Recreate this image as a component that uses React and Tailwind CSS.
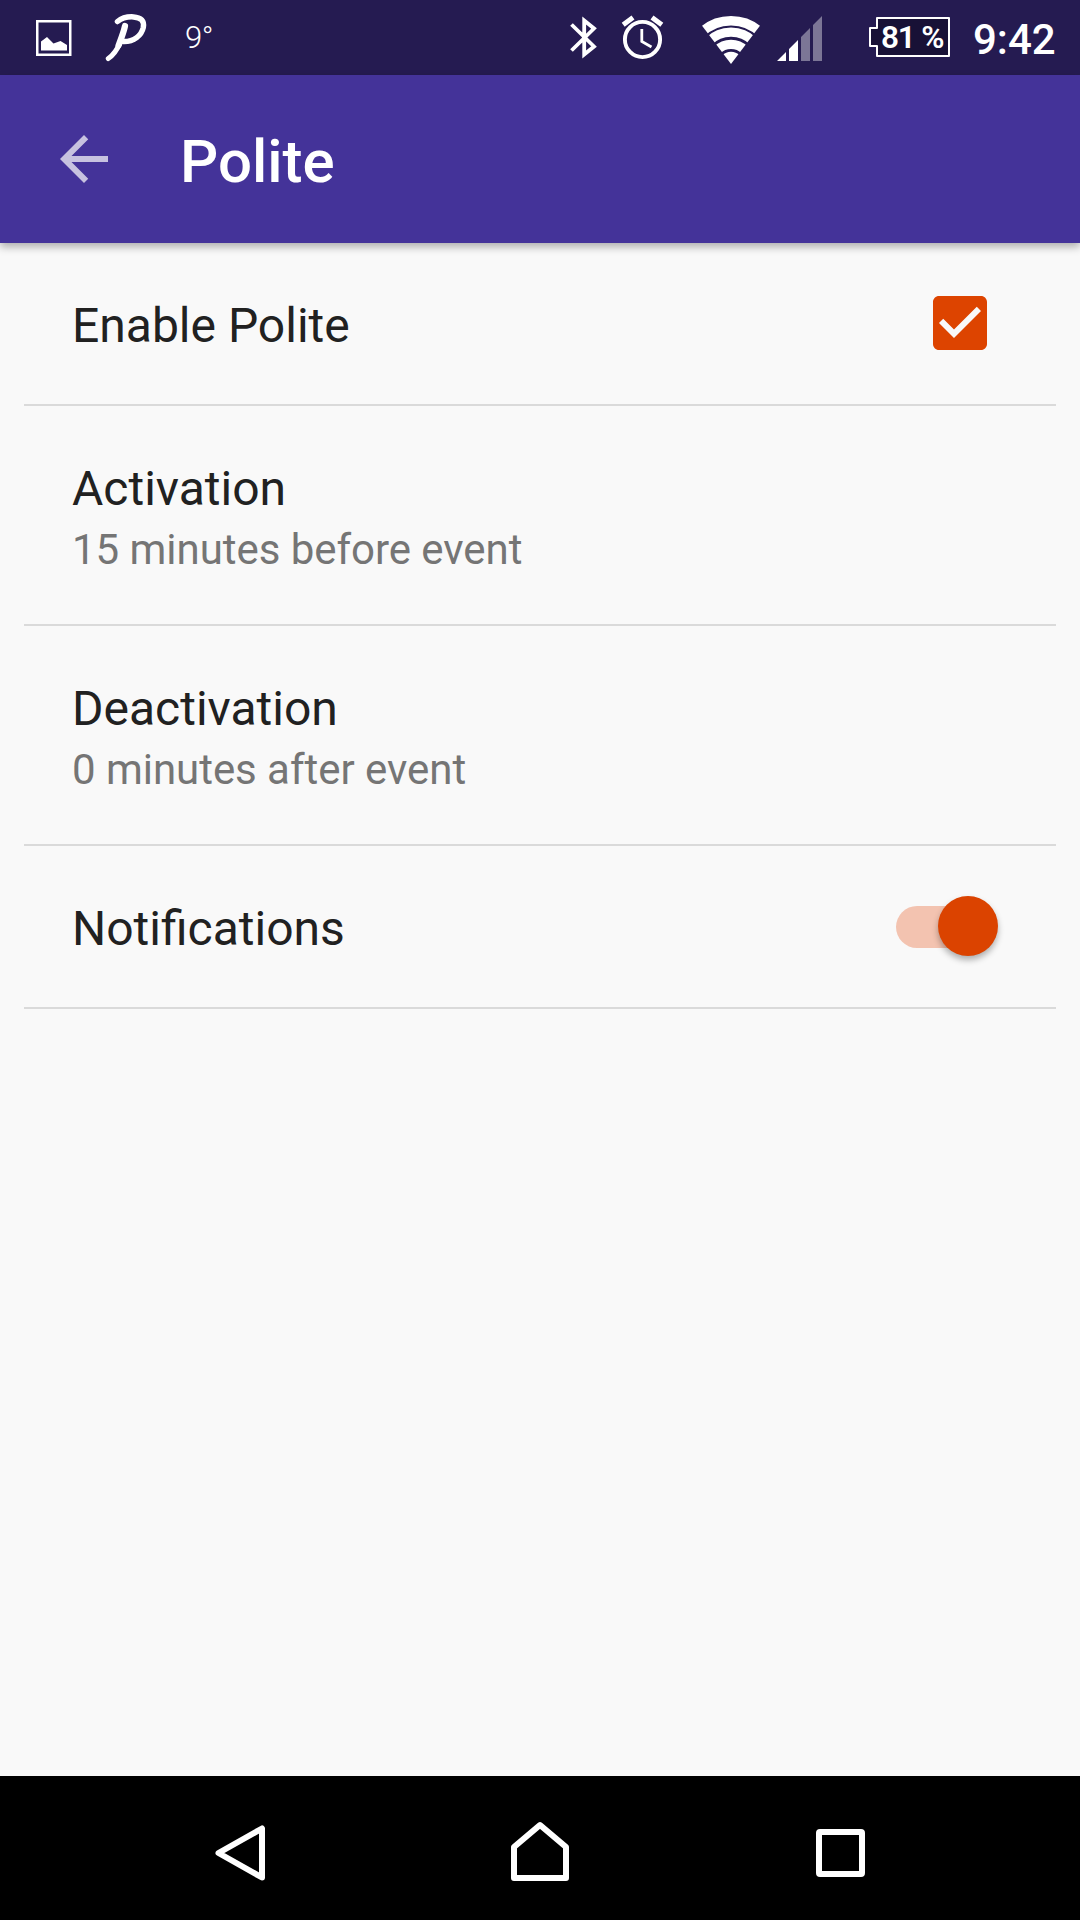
import React from "react";

function PictureIcon() {
  return (
    <svg width="36" height="36" viewBox="0 0 36 36" className="ml-9 mt-5 shrink-0" fill="none">
      <rect x="1.250" y="1.250" width="33" height="33.500" stroke="white" strokeWidth="2.500" />
      <path d="M5 30.500V21.500L11 17l6.500 6.500L24.500 21L31 25v5.500Z" fill="white" />
    </svg>
  );
}

function PoliteLogo() {
  return (
    <svg width="44" height="50" viewBox="0 0 44 50" className="ml-8 mt-[13px] shrink-0" fill="none" stroke="white" strokeLinecap="round" strokeLinejoin="round">
      <path d="M21 13C19.500 20 17 26 14.500 32.500" strokeWidth="6.200" />
      <path d="M16.500 29C13.500 36 9.500 42 4.300 45.500" strokeWidth="5" />
      <path d="M13.500 8.500C18 4.800 24 3.600 29.500 3.900C37 4.300 40.600 8 39.300 14.500C37.500 22.500 30 28.800 19.500 28.600" strokeWidth="5.500" />
    </svg>
  );
}

function BluetoothIcon() {
  return (
    <svg width="28" height="44" viewBox="0 0 28 44" className="ml-[357px] mt-4 shrink-0" fill="none" stroke="white" strokeWidth="3.800">
      <path d="M1.500 8.500L24 30.500L14.200 38.500V4.500L24 12.500L1.500 34.500" />
    </svg>
  );
}

function AlarmIcon() {
  return (
    <svg width="44" height="46" viewBox="0 0 44 46" className="ml-[23px] mt-[14px] shrink-0" fill="none" stroke="white">
      <circle cx="21.500" cy="25.500" r="17.600" strokeWidth="3.900" />
      <path d="M2.200 10.700L12 3.500M31 3.500L40.800 10.700" strokeWidth="5" />
      <path d="M20.800 15V27.500L30.500 33" strokeWidth="2.800" />
    </svg>
  );
}

function WifiIcon() {
  return (
    <svg width="60" height="50" viewBox="0 0 60 50" className="ml-9 mt-[15px] shrink-0">
      <defs>
        <clipPath id="wifi-fan">
          <path d="M30 49L0.500 10V0H59.500V10Z" />
        </clipPath>
      </defs>
      <g clipPath="url(#wifi-fan)" fill="none" stroke="white">
        <circle cx="30" cy="49" r="43.300" strokeWidth="9.500" />
        <circle cx="30" cy="49" r="31.800" strokeWidth="9.200" />
        <circle cx="30" cy="49" r="19.700" strokeWidth="9.200" />
        <circle cx="30" cy="49" r="6.150" strokeWidth="12.300" />
      </g>
    </svg>
  );
}

function SignalIcon() {
  return (
    <svg width="46" height="46" viewBox="0 0 46 46" className="ml-4 mt-4 shrink-0" fill="white">
      <path d="M0 45L9 36V45ZM12 33L21 24V45H12Z" />
      <path d="M24 21L33 12V45H24ZM36 9L45 0V45H36Z" opacity="0.400" />
    </svg>
  );
}

function Battery() {
  return (
    <div className="relative ml-[46px] mt-[17px] h-10 w-[81px] shrink-0">
      <svg width="81" height="40" viewBox="0 0 81 40" className="absolute inset-0">
        <path d="M8 1H80V39H8V29H1V11H8Z" fill="#181136" stroke="white" strokeWidth="2" strokeLinejoin="round" />
      </svg>
      <span className="relative block whitespace-nowrap pl-[12px] pt-px text-[31.500px] leading-[40px] tracking-[-1.200px] font-semibold">81 %</span>
    </div>
  );
}

function StatusBar() {
  return (
    <header className="flex h-[75px] items-start bg-[#251b51] text-white">
      <PictureIcon />
      <PoliteLogo />
      <span className="ml-[37px] mt-[19px] w-[28px] shrink-0 text-[31px] leading-[37px] tracking-[-0.500px] font-light">9°</span>
      <BluetoothIcon />
      <AlarmIcon />
      <WifiIcon />
      <SignalIcon />
      <Battery />
      <span className="ml-[23px] mt-[15px] text-[42px] leading-[50px] font-medium">9:42</span>
    </header>
  );
}

function AppBar() {
  return (
    <div className="relative z-10 flex h-[168px] items-center bg-[#443399] text-white shadow-[0_4px_8px_rgba(0,0,0,0.300)]">
      <svg width="48" height="48" viewBox="0 0 16 16" className="ml-[60px]" fill="white" opacity="0.700">
        <path d="M16 7H3.830l5.590-5.590L8 0L0 8l8 8l1.410-1.410L3.830 9H16Z" />
      </svg>
      <h1 className="ml-[72px] mt-[5px] text-[60px] leading-[70px] font-medium">Polite</h1>
    </div>
  );
}

function Checkbox() {
  return (
    <svg width="54" height="54" viewBox="3 3 18 18" className="mr-[69px] mt-[53px]">
      <path fill="#dd4400" d="M19 3H5c-1.110 0-2 .9-2 2v14c0 1.100.89 2 2 2h14c1.110 0 2-.9 2-2V5c0-1.100-.89-2-2-2zm-9 14l-5-5 1.410-1.410L10 14.170l7.590-7.590L19 8l-9 9z" />
    </svg>
  );
}

function Toggle() {
  return (
    <div className="mr-[58px] mt-[50px] flex h-[61px] w-[102px] items-center">
      <div className="flex h-[42px] w-[90px] items-center justify-end rounded-full bg-[#f3c3b0]">
        <div className="-mr-[11.500px] -mt-px h-[60px] w-[60px] shrink-0 rounded-full bg-[#db4300] shadow-[0_4px_6px_rgba(0,0,0,0.300)]" />
      </div>
    </div>
  );
}

function Row({ title, summary, control }) {
  return (
    <li className="flex items-start justify-between border-b-2 border-[#dadada] pl-12">
      <div className={summary ? "h-[218px] pt-[55px]" : "h-[161px] pt-[55px]"}>
        <div className="text-[48px] leading-[56px] text-[#212121]">{title}</div>
        {summary && <div className="mt-[9px] text-[42px] leading-[48px] tracking-[-0.040px] text-[#757575]">{summary}</div>}
      </div>
      {control}
    </li>
  );
}

function NavigationBar() {
  return (
    <nav className="flex h-36 items-start bg-black">
      <svg width="52" height="58" viewBox="0 0 52 58" className="ml-[214px] mt-12" fill="none" stroke="white" strokeWidth="6" strokeLinejoin="round">
        <path d="M48 4.500V53.500L4.500 29Z" />
      </svg>
      <svg width="60" height="62" viewBox="0 0 60 62" className="ml-[244px] mt-[44px]" fill="none" stroke="white" strokeWidth="6" strokeLinejoin="round">
        <path d="M4 58V27L30 5L56 27V58Z" />
      </svg>
      <div className="ml-[246px] mt-[53px] h-12 w-[49px] rounded-[4px] border-6 border-white" />
    </nav>
  );
}

export default function App() {
  return (
    <div className="flex h-[1920px] w-[1080px] flex-col overflow-hidden bg-[#f9f9f9] font-[Roboto,sans-serif]">
      <StatusBar />
      <AppBar />
      <main className="flex-1 px-6">
        <ul>
          <Row title="Enable Polite" control={<Checkbox />} />
          <Row title="Activation" summary="15 minutes before event" />
          <Row title="Deactivation" summary="0 minutes after event" />
          <Row title="Notifications" control={<Toggle />} />
        </ul>
      </main>
      <NavigationBar />
    </div>
  );
}
